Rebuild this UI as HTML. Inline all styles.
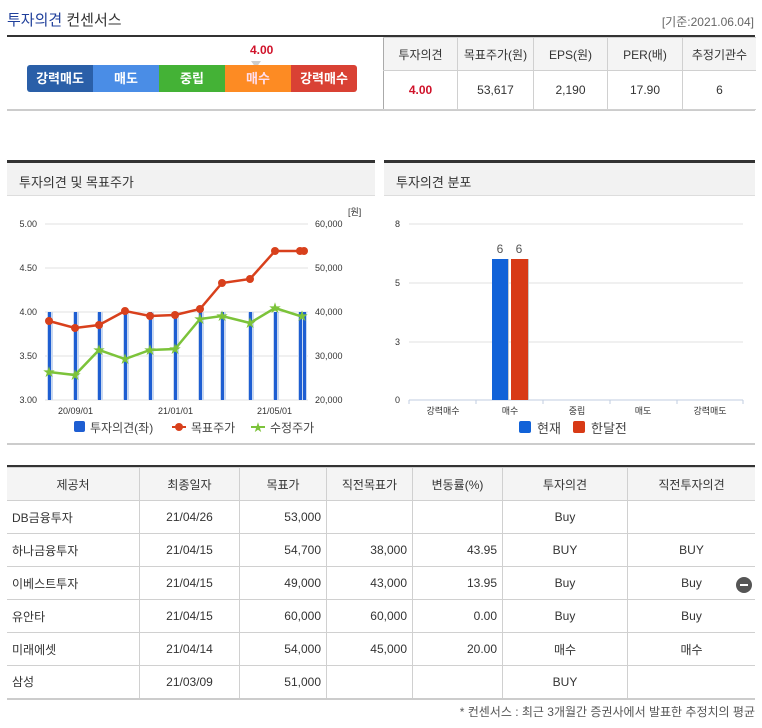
<!DOCTYPE html>
<html><head><meta charset="utf-8"><style>
body{margin:0;width:762px;height:728px;background:#fff;font-family:"Liberation Sans","Noto Sans CJK KR",sans-serif;position:relative;overflow:hidden;color:#333}
.a{position:absolute}
.t{font-size:12px}
table{border-collapse:collapse;position:absolute;font-size:12px}
td{border:1px solid #d0d0d0;padding:0}
</style></head><body>
<div class="a" style="left:7px;top:9px;font-size:15px;font-weight:normal"><span style="color:#1f3f9b">투자의견</span> <span style="color:#333">컨센서스</span></div>
<div class="a t" style="right:8px;top:13px;color:#666">[기준:2021.06.04]</div>
<div class="a" style="left:7px;top:35px;width:748px;height:2px;background:#333"></div>
<div class="a" style="left:7px;top:109px;width:748px;height:2px;background:#ccc"></div>
<div class="a" style="left:250px;top:43px;color:#d0122a;font-weight:bold;font-size:12px">4.00</div>
<div class="a" style="left:251px;top:61px;width:0;height:0;border-left:5px solid transparent;border-right:5px solid transparent;border-top:7px solid #ccc"></div>
<div class="a" style="left:27px;top:65px;width:330px;height:27px;border-radius:3px;overflow:hidden;display:flex;font-size:13px;font-weight:bold;color:#fff;line-height:27px;text-align:center">
<div style="width:66px;background:#2a5fa8">강력매도</div><div style="width:66px;background:#4a8de6">매도</div><div style="width:66px;background:#44b236">중립</div><div style="width:66px;background:#fd8b23;color:#fde">매수</div><div style="width:66px;background:#d94134">강력매수</div></div>
<table style="left:383px;top:37px;width:373px;text-align:center;color:#333">
<tr style="height:33px;background:#f4f4f4"><td style="width:73px;border-left:1px solid #aaa">투자의견</td><td style="width:75px">목표주가(원)</td><td style="width:73px">EPS(원)</td><td style="width:74px">PER(배)</td><td style="border-right:0">추정기관수</td></tr>
<tr style="height:39px"><td style="color:#d0122a;font-weight:bold;border-left:1px solid #aaa">4.00</td><td>53,617</td><td>2,190</td><td>17.90</td><td style="border-right:0">6</td></tr></table>

<div class="a" style="left:7px;top:160px;width:368px;height:3px;background:#333"></div>
<div class="a" style="left:7px;top:163px;width:368px;height:32px;background:#f2f2f2;border-bottom:1px solid #ddd"></div>
<div class="a" style="left:19px;top:172px;font-size:13px">투자의견 및 목표주가</div>
<div class="a" style="left:384px;top:160px;width:371px;height:3px;background:#333"></div>
<div class="a" style="left:384px;top:163px;width:371px;height:32px;background:#f2f2f2;border-bottom:1px solid #ddd"></div>
<div class="a" style="left:396px;top:172px;font-size:13px">투자의견 분포</div>
<div class="a" style="left:7px;top:443px;width:748px;height:2px;background:#ccc"></div>

<svg class="a" style="left:0;top:195px" width="762" height="250" font-family="Liberation Sans, Noto Sans CJK KR, sans-serif" font-size="9" fill="#333">
<g transform="translate(0,-195)">
<g stroke="#e2e2e2" stroke-width="1"><line x1="45" x2="308" y1="224" y2="224"/><line x1="45" x2="308" y1="268" y2="268"/><line x1="45" x2="308" y1="312" y2="312"/><line x1="45" x2="308" y1="356" y2="356"/><line x1="45" x2="308" y1="400" y2="400"/></g>
<g text-anchor="end"><text x="37" y="227">5.00</text><text x="37" y="271">4.50</text><text x="37" y="315">4.00</text><text x="37" y="359">3.50</text><text x="37" y="403">3.00</text></g>
<g><text x="315" y="227">60,000</text><text x="315" y="271">50,000</text><text x="315" y="315">40,000</text><text x="315" y="359">30,000</text><text x="315" y="403">20,000</text><text x="348" y="215">[원]</text></g>
<g><text x="58" y="414">20/09/01</text><text x="158" y="414">21/01/01</text><text x="257" y="414">21/05/01</text></g>
<g fill="#c9d8f0"><rect x="47" y="312" width="6" height="88"/><rect x="73" y="312" width="6" height="88"/><rect x="97" y="312" width="6" height="88"/><rect x="123" y="312" width="6" height="88"/><rect x="148" y="312" width="6" height="88"/><rect x="173" y="312" width="6" height="88"/><rect x="198" y="312" width="6" height="88"/><rect x="220" y="312" width="6" height="88"/><rect x="248" y="312" width="6" height="88"/><rect x="273" y="312" width="6" height="88"/><rect x="298" y="312" width="9" height="88"/></g>
<g fill="#1e5ed2"><rect x="48" y="312" width="3" height="88"/><rect x="74" y="312" width="3" height="88"/><rect x="98" y="312" width="3" height="88"/><rect x="124" y="312" width="3" height="88"/><rect x="149" y="312" width="3" height="88"/><rect x="174" y="312" width="3" height="88"/><rect x="199" y="312" width="3" height="88"/><rect x="221" y="312" width="3" height="88"/><rect x="249" y="312" width="3" height="88"/><rect x="274" y="312" width="3" height="88"/><rect x="299" y="312" width="3" height="88"/><rect x="303" y="312" width="3" height="88"/></g>
<polyline fill="none" stroke="#7cc33a" stroke-width="2.5" points="49,372 75,375 99,350 125,359 150,350 175,349 200,319 222,316 250,323 275,308 300,316 304,316"/>
<g fill="#7cc33a" font-size="12" text-anchor="middle"><text x="49" y="376">★</text><text x="75" y="379">★</text><text x="99" y="354">★</text><text x="125" y="363">★</text><text x="150" y="354">★</text><text x="175" y="353">★</text><text x="200" y="323">★</text><text x="222" y="320">★</text><text x="250" y="327">★</text><text x="275" y="312">★</text><text x="302" y="320">★</text></g>
<polyline fill="none" stroke="#d8401c" stroke-width="2.5" points="49,321 75,328 99,325 125,311 150,316 175,315 200,309 222,283 250,279 275,251 300,251 304,251"/>
<g fill="#d8401c"><circle cx="49" cy="321" r="4"/><circle cx="75" cy="328" r="4"/><circle cx="99" cy="325" r="4"/><circle cx="125" cy="311" r="4"/><circle cx="150" cy="316" r="4"/><circle cx="175" cy="315" r="4"/><circle cx="200" cy="309" r="4"/><circle cx="222" cy="283" r="4"/><circle cx="250" cy="279" r="4"/><circle cx="275" cy="251" r="4"/><circle cx="300" cy="251" r="4"/><circle cx="304" cy="251" r="4"/></g>
<g font-size="12" fill="#444"><rect x="74" y="421" width="11" height="11" rx="2" fill="#1e5ed2"/><text x="90" y="432">투자의견(좌)</text>
<line x1="172" x2="186" y1="427" y2="427" stroke="#d8401c" stroke-width="2"/><circle cx="179" cy="427" r="4" fill="#d8401c"/><text x="191" y="432">목표주가</text>
<line x1="251" x2="265" y1="427" y2="427" stroke="#7cc33a" stroke-width="2"/><text x="258" y="431" fill="#7cc33a" text-anchor="middle" font-size="11">★</text><text x="270" y="432">수정주가</text></g>

<g stroke="#e2e2e2"><line x1="409" x2="743" y1="224" y2="224"/><line x1="409" x2="743" y1="283" y2="283"/><line x1="409" x2="743" y1="342" y2="342"/></g>
<line x1="409" x2="743" y1="400" y2="400" stroke="#c0cde0"/>
<g stroke="#c0cde0"><line x1="409" x2="409" y1="400" y2="404"/><line x1="476" x2="476" y1="400" y2="404"/><line x1="543" x2="543" y1="400" y2="404"/><line x1="610" x2="610" y1="400" y2="404"/><line x1="677" x2="677" y1="400" y2="404"/><line x1="743" x2="743" y1="400" y2="404"/></g>
<g><text x="395" y="227">8</text><text x="395" y="286">5</text><text x="395" y="345">3</text><text x="395" y="403">0</text></g>
<rect x="493" y="259" width="16" height="141" fill="#c8c8c8"/><rect x="512" y="259" width="17" height="141" fill="#c8c8c8"/>
<rect x="492" y="259" width="16" height="141" fill="#1162d8"/><rect x="511" y="259" width="17" height="141" fill="#d83a16"/>
<g font-size="12" fill="#555" text-anchor="middle"><text x="500" y="253">6</text><text x="519" y="253">6</text></g>
<g text-anchor="middle"><text x="443" y="414">강력매수</text><text x="510" y="414">매수</text><text x="577" y="414">중립</text><text x="643" y="414">매도</text><text x="710" y="414">강력매도</text></g>
<g font-size="13" fill="#444"><rect x="519" y="421" width="12" height="12" rx="2" fill="#1162d8"/><text x="537" y="433">현재</text><rect x="573" y="421" width="12" height="12" rx="2" fill="#d83a16"/><text x="591" y="433">한달전</text></g>
</g></svg>

<div class="a" style="left:7px;top:465px;width:748px;height:2px;background:#333"></div>
<table style="left:7px;top:467px;width:748px;color:#333">
<tr style="height:33px;background:#f4f4f4;text-align:center"><td style="width:132px;border-left:0">제공처</td><td style="width:99px">최종일자</td><td style="width:86px">목표가</td><td style="width:85px">직전목표가</td><td style="width:89px">변동률(%)</td><td style="width:124px">투자의견</td><td style="border-right:0">직전투자의견</td></tr>
<tr style="height:33px"><td style="border-left:0;padding-left:5px">DB금융투자</td><td style="text-align:center">21/04/26</td><td style="text-align:right;padding-right:5px">53,000</td><td></td><td></td><td style="text-align:center">Buy</td><td style="border-right:0"></td></tr>
<tr style="height:33px"><td style="border-left:0;padding-left:5px">하나금융투자</td><td style="text-align:center">21/04/15</td><td style="text-align:right;padding-right:5px">54,700</td><td style="text-align:right;padding-right:5px">38,000</td><td style="text-align:right;padding-right:5px">43.95</td><td style="text-align:center">BUY</td><td style="border-right:0;text-align:center">BUY</td></tr>
<tr style="height:33px"><td style="border-left:0;padding-left:5px">이베스트투자</td><td style="text-align:center">21/04/15</td><td style="text-align:right;padding-right:5px">49,000</td><td style="text-align:right;padding-right:5px">43,000</td><td style="text-align:right;padding-right:5px">13.95</td><td style="text-align:center">Buy</td><td style="border-right:0;text-align:center">Buy</td></tr>
<tr style="height:33px"><td style="border-left:0;padding-left:5px">유안타</td><td style="text-align:center">21/04/15</td><td style="text-align:right;padding-right:5px">60,000</td><td style="text-align:right;padding-right:5px">60,000</td><td style="text-align:right;padding-right:5px">0.00</td><td style="text-align:center">Buy</td><td style="border-right:0;text-align:center">Buy</td></tr>
<tr style="height:33px"><td style="border-left:0;padding-left:5px">미래에셋</td><td style="text-align:center">21/04/14</td><td style="text-align:right;padding-right:5px">54,000</td><td style="text-align:right;padding-right:5px">45,000</td><td style="text-align:right;padding-right:5px">20.00</td><td style="text-align:center">매수</td><td style="border-right:0;text-align:center">매수</td></tr>
<tr style="height:33px"><td style="border-left:0;padding-left:5px;border-bottom:2px solid #ccc">삼성</td><td style="text-align:center;border-bottom:2px solid #ccc">21/03/09</td><td style="text-align:right;padding-right:5px;border-bottom:2px solid #ccc">51,000</td><td style="border-bottom:2px solid #ccc"></td><td style="border-bottom:2px solid #ccc"></td><td style="text-align:center;border-bottom:2px solid #ccc">BUY</td><td style="border-right:0;border-bottom:2px solid #ccc"></td></tr>
</table>
<div class="a" style="left:736px;top:577px;width:16px;height:16px;border-radius:50%;background:#555"><div style="position:absolute;left:4px;top:7px;width:8px;height:2px;background:#fff"></div></div>
<div class="a t" style="right:7px;top:703px;color:#555">* 컨센서스 : 최근 3개월간 증권사에서 발표한 추정치의 평균</div>
</body></html>
